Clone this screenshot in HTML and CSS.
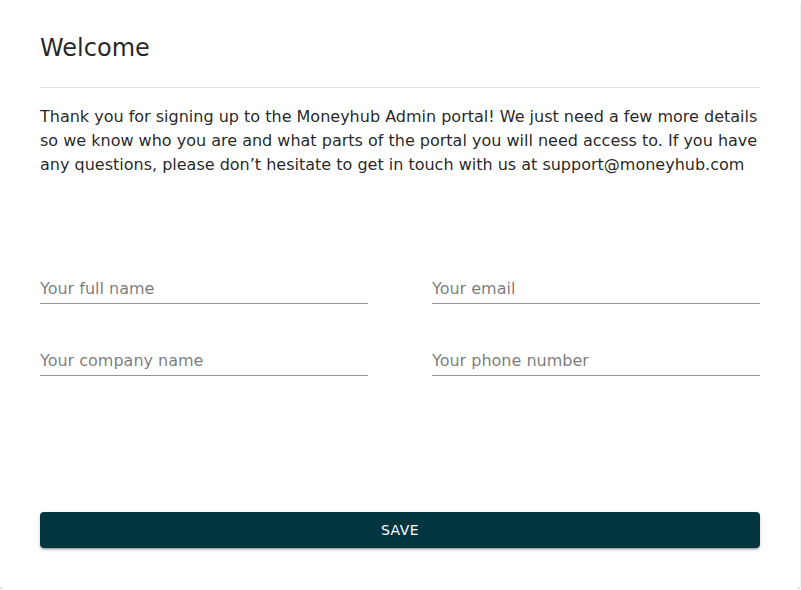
FILE: index.html
```html
<!DOCTYPE html>
<html lang="en">
<head>
<meta charset="utf-8">
<title>Welcome</title>
<link rel="stylesheet" href="styles.css">
</head>
<body>
<div class="card">
  <h1 class="title">Welcome</h1>
  <hr class="divider">
  <p class="intro">Thank you for signing up to the Moneyhub Admin portal! We just need a few more details so we know who you are and what parts of the portal you will need access to. If you have any questions, please don’t hesitate to get in touch with us at support@moneyhub.com</p>
  <form class="form">
    <div class="grid">
      <label class="field"><input class="input" type="text" placeholder="Your full name"></label>
      <label class="field"><input class="input" type="email" placeholder="Your email"></label>
      <label class="field"><input class="input" type="text" placeholder="Your company name"></label>
      <label class="field"><input class="input" type="tel" placeholder="Your phone number"></label>
    </div>
    <button class="save" type="button">Save</button>
  </form>
</div>
</body>
</html>
```
FILE: styles.css
```css
html, body {
  margin: 0;
  padding: 0;
  background: #ffffff;
}
body {
  font-family: "DejaVu Sans", sans-serif;
  color: rgba(0, 0, 0, 0.87);
}
.card {
  box-sizing: border-box;
  width: 800px;
  height: 589px;
  padding: 32px 40px 0 40px;
  background: #fff;
  border-radius: 4px;
  box-shadow: 0 2px 1px -1px rgba(0,0,0,0.2), 0 1px 1px 0 rgba(0,0,0,0.14), 0 1px 3px 0 rgba(0,0,0,0.12);
}
.title {
  margin: 0;
  font-size: 24px;
  font-weight: 400;
  line-height: 32px;
}
.divider {
  margin: 23px 0 0 0;
  border: none;
  border-top: 1px solid rgba(0, 0, 0, 0.12);
  height: 0;
}
.intro {
  margin: 17px 0 0 0;
  font-size: 16px;
  line-height: 24px;
}
.form {
  margin-top: 95px;
  display: flex;
  flex-direction: column;
}
.grid {
  display: grid;
  grid-template-columns: 1fr 1fr;
  column-gap: 64px;
  row-gap: 40px;
}
.field {
  display: block;
  border-bottom: 1px solid rgba(0, 0, 0, 0.42);
}
.input {
  box-sizing: content-box;
  display: block;
  width: 100%;
  height: 23px;
  padding: 5px 0 3px 0;
  margin: 0;
  border: none;
  outline: none;
  background: transparent;
  font-family: "DejaVu Sans", sans-serif;
  font-size: 16px;
  color: rgba(0, 0, 0, 0.87);
}
.input::placeholder {
  color: rgba(0, 0, 0, 0.54);
  opacity: 1;
}
.save {
  margin-top: 136px;
  height: 36px;
  border: none;
  border-radius: 4px;
  background: #033541;
  color: #fff;
  font-family: "DejaVu Sans", sans-serif;
  font-size: 14px;
  letter-spacing: 0.4px;
  text-transform: uppercase;
  box-shadow: 0 3px 1px -2px rgba(0,0,0,0.2), 0 2px 2px 0 rgba(0,0,0,0.14), 0 1px 5px 0 rgba(0,0,0,0.12);
  cursor: pointer;
}
```
